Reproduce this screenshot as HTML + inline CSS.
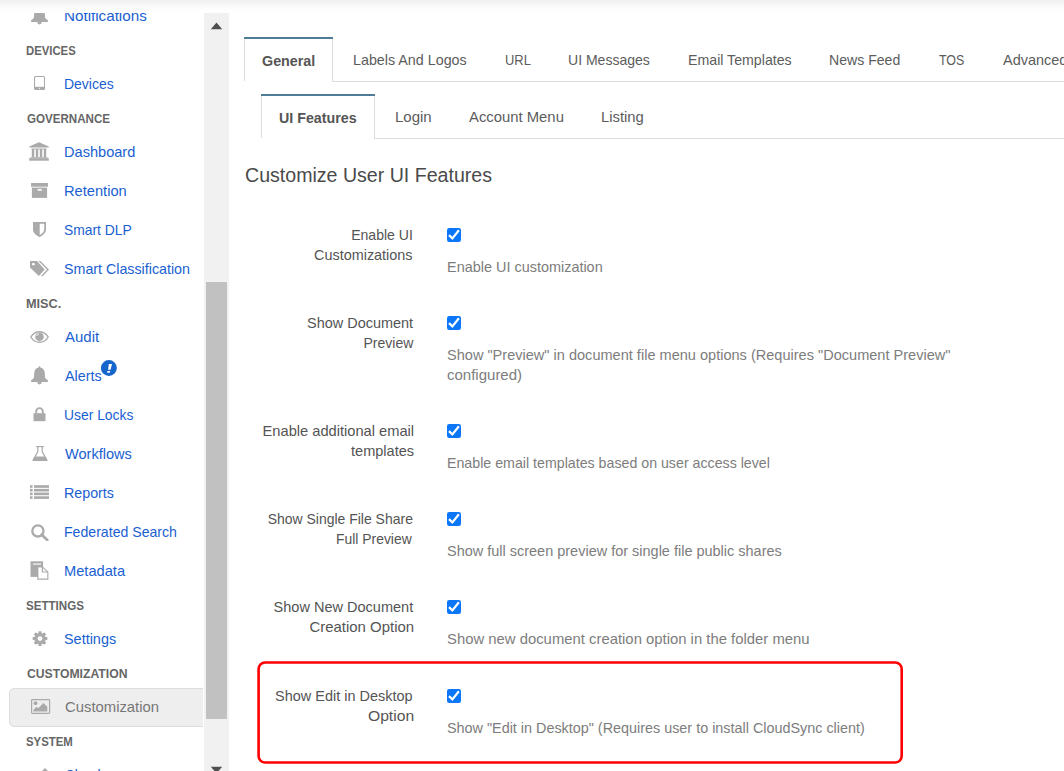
<!DOCTYPE html>
<html><head><meta charset="utf-8"><style>
html,body{margin:0;padding:0;background:#fff;width:1064px;height:771px;overflow:hidden;position:relative;font-family:"Liberation Sans",sans-serif}
.t{position:absolute;white-space:nowrap}
.b{position:absolute;display:block}
#side{position:absolute;left:0;top:13px;width:203px;height:758px;overflow:hidden;background:#fff}
#track{position:absolute;left:204px;top:13px;width:25px;height:758px;background:#f1f1f1}
#thumb{position:absolute;left:206px;top:282px;width:21px;height:437px;background:#c1c1c1}
</style></head><body>
<div class="b" style="left:244px;top:39px;width:89px;height:42px;border:1px solid #dddddd;border-top:none;border-bottom:none;background:#fff;box-sizing:border-box"></div><div class="b" style="left:244px;top:37px;width:89px;height:2px;background:#4e7c96"></div><div class="b" style="left:332px;top:81px;width:732px;height:1px;background:#dddddd"></div><div id="t0" class="t" style="left:262.00px;top:53.10px;font-size:15px;line-height:15px;color:#555;font-weight:700;transform:scaleX(0.9538);transform-origin:left center">General</div><div id="t1" class="t" style="left:353.00px;top:52.30px;font-size:15px;line-height:15px;color:#5c5c5c;font-weight:400;transform:scaleX(0.9534);transform-origin:left center">Labels And Logos</div><div id="t2" class="t" style="left:505.00px;top:52.30px;font-size:15px;line-height:15px;color:#5c5c5c;font-weight:400;transform:scaleX(0.8626);transform-origin:left center">URL</div><div id="t3" class="t" style="left:568.00px;top:52.30px;font-size:15px;line-height:15px;color:#5c5c5c;font-weight:400;transform:scaleX(0.9354);transform-origin:left center">UI Messages</div><div id="t4" class="t" style="left:688.00px;top:52.30px;font-size:15px;line-height:15px;color:#5c5c5c;font-weight:400;transform:scaleX(0.9445);transform-origin:left center">Email Templates</div><div id="t5" class="t" style="left:828.80px;top:52.30px;font-size:15px;line-height:15px;color:#5c5c5c;font-weight:400;transform:scaleX(0.9393);transform-origin:left center">News Feed</div><div id="t6" class="t" style="left:939.00px;top:52.30px;font-size:15px;line-height:15px;color:#5c5c5c;font-weight:400;transform:scaleX(0.8281);transform-origin:left center">TOS</div><div id="t7" class="t" style="left:1002.50px;top:52.30px;font-size:15px;line-height:15px;color:#5c5c5c;font-weight:400;transform:scaleX(0.9650);transform-origin:left center">Advanced</div><div class="b" style="left:261px;top:96px;width:114px;height:42px;border:1px solid #dddddd;border-top:none;border-bottom:none;background:#fff;box-sizing:border-box"></div><div class="b" style="left:261px;top:94px;width:114px;height:2px;background:#4e7c96"></div><div class="b" style="left:374px;top:138px;width:690px;height:1px;background:#dddddd"></div><div id="t8" class="t" style="left:279.00px;top:110.00px;font-size:15px;line-height:15px;color:#555;font-weight:700;transform:scaleX(0.9500);transform-origin:left center">UI Features</div><div id="t9" class="t" style="left:394.60px;top:109.30px;font-size:15px;line-height:15px;color:#5c5c5c;font-weight:400;transform:scaleX(1.0005);transform-origin:left center">Login</div><div id="t10" class="t" style="left:469.20px;top:109.30px;font-size:15px;line-height:15px;color:#5c5c5c;font-weight:400;transform:scaleX(0.9895);transform-origin:left center">Account Menu</div><div id="t11" class="t" style="left:601.00px;top:109.30px;font-size:15px;line-height:15px;color:#5c5c5c;font-weight:400;transform:scaleX(0.9879);transform-origin:left center">Listing</div><div id="t12" class="t" style="left:244.50px;top:165.05px;font-size:20.5px;line-height:20.5px;color:#4a4a4a;font-weight:400;transform:scaleX(0.9551);transform-origin:left center">Customize User UI Features</div><div id="t13" class="t" style="right:651.00px;top:227.30px;font-size:15px;line-height:15px;color:#545454;font-weight:400;transform:scaleX(0.9366);transform-origin:right center">Enable UI</div><div id="t14" class="t" style="right:651.00px;top:247.30px;font-size:15px;line-height:15px;color:#545454;font-weight:400;transform:scaleX(0.9605);transform-origin:right center">Customizations</div><svg class="b" style="left:447px;top:228px" width="14" height="14" viewBox="0 0 14 14"><rect x="0" y="0" width="14" height="14" rx="2.2" fill="#0b76f7"/><path d="M2.0 7.1 L5.4 10.4 L11.9 2.3" fill="none" stroke="#fff" stroke-width="2.2" stroke-linecap="butt" stroke-linejoin="miter"/></svg><div id="t15" class="t" style="left:447.00px;top:259.30px;font-size:15px;line-height:15px;color:#7d7d7d;font-weight:400;transform:scaleX(0.9625);transform-origin:left center">Enable UI customization</div><div id="t16" class="t" style="right:651.00px;top:315.30px;font-size:15px;line-height:15px;color:#545454;font-weight:400;transform:scaleX(0.9631);transform-origin:right center">Show Document</div><div id="t17" class="t" style="right:651.00px;top:335.30px;font-size:15px;line-height:15px;color:#545454;font-weight:400;transform:scaleX(0.9347);transform-origin:right center">Preview</div><svg class="b" style="left:447px;top:316px" width="14" height="14" viewBox="0 0 14 14"><rect x="0" y="0" width="14" height="14" rx="2.2" fill="#0b76f7"/><path d="M2.0 7.1 L5.4 10.4 L11.9 2.3" fill="none" stroke="#fff" stroke-width="2.2" stroke-linecap="butt" stroke-linejoin="miter"/></svg><div id="t18" class="t" style="left:447.00px;top:347.30px;font-size:15px;line-height:15px;color:#7d7d7d;font-weight:400;transform:scaleX(0.9700);transform-origin:left center">Show &quot;Preview&quot; in document file menu options (Requires &quot;Document Preview&quot;</div><div id="t19" class="t" style="left:447.00px;top:367.30px;font-size:15px;line-height:15px;color:#7d7d7d;font-weight:400;transform:scaleX(1.0002);transform-origin:left center">configured)</div><div id="t20" class="t" style="right:650.00px;top:423.30px;font-size:15px;line-height:15px;color:#545454;font-weight:400;transform:scaleX(0.9771);transform-origin:right center">Enable additional email</div><div id="t21" class="t" style="right:650.00px;top:443.30px;font-size:15px;line-height:15px;color:#545454;font-weight:400;transform:scaleX(0.9691);transform-origin:right center">templates</div><svg class="b" style="left:447px;top:424px" width="14" height="14" viewBox="0 0 14 14"><rect x="0" y="0" width="14" height="14" rx="2.2" fill="#0b76f7"/><path d="M2.0 7.1 L5.4 10.4 L11.9 2.3" fill="none" stroke="#fff" stroke-width="2.2" stroke-linecap="butt" stroke-linejoin="miter"/></svg><div id="t22" class="t" style="left:447.00px;top:455.30px;font-size:15px;line-height:15px;color:#7d7d7d;font-weight:400;transform:scaleX(0.9469);transform-origin:left center">Enable email templates based on user access level</div><div id="t23" class="t" style="right:651.00px;top:511.30px;font-size:15px;line-height:15px;color:#545454;font-weight:400;transform:scaleX(0.9318);transform-origin:right center">Show Single File Share</div><div id="t24" class="t" style="right:652.00px;top:531.30px;font-size:15px;line-height:15px;color:#545454;font-weight:400;transform:scaleX(0.9260);transform-origin:right center">Full Preview</div><svg class="b" style="left:447px;top:512px" width="14" height="14" viewBox="0 0 14 14"><rect x="0" y="0" width="14" height="14" rx="2.2" fill="#0b76f7"/><path d="M2.0 7.1 L5.4 10.4 L11.9 2.3" fill="none" stroke="#fff" stroke-width="2.2" stroke-linecap="butt" stroke-linejoin="miter"/></svg><div id="t25" class="t" style="left:447.00px;top:543.30px;font-size:15px;line-height:15px;color:#7d7d7d;font-weight:400;transform:scaleX(0.9652);transform-origin:left center">Show full screen preview for single file public shares</div><div id="t26" class="t" style="right:651.00px;top:599.30px;font-size:15px;line-height:15px;color:#545454;font-weight:400;transform:scaleX(0.9686);transform-origin:right center">Show New Document</div><div id="t27" class="t" style="right:650.00px;top:619.30px;font-size:15px;line-height:15px;color:#545454;font-weight:400;transform:scaleX(0.9953);transform-origin:right center">Creation Option</div><svg class="b" style="left:447px;top:600px" width="14" height="14" viewBox="0 0 14 14"><rect x="0" y="0" width="14" height="14" rx="2.2" fill="#0b76f7"/><path d="M2.0 7.1 L5.4 10.4 L11.9 2.3" fill="none" stroke="#fff" stroke-width="2.2" stroke-linecap="butt" stroke-linejoin="miter"/></svg><div id="t28" class="t" style="left:447.00px;top:631.30px;font-size:15px;line-height:15px;color:#7d7d7d;font-weight:400;transform:scaleX(0.9904);transform-origin:left center">Show new document creation option in the folder menu</div><div id="t29" class="t" style="right:651.00px;top:688.30px;font-size:15px;line-height:15px;color:#545454;font-weight:400;transform:scaleX(0.9646);transform-origin:right center">Show Edit in Desktop</div><div id="t30" class="t" style="right:650.00px;top:708.30px;font-size:15px;line-height:15px;color:#545454;font-weight:400;transform:scaleX(1.0471);transform-origin:right center">Option</div><svg class="b" style="left:447px;top:689px" width="14" height="14" viewBox="0 0 14 14"><rect x="0" y="0" width="14" height="14" rx="2.2" fill="#0b76f7"/><path d="M2.0 7.1 L5.4 10.4 L11.9 2.3" fill="none" stroke="#fff" stroke-width="2.2" stroke-linecap="butt" stroke-linejoin="miter"/></svg><div id="t31" class="t" style="left:447.00px;top:720.30px;font-size:15px;line-height:15px;color:#7d7d7d;font-weight:400;transform:scaleX(0.9585);transform-origin:left center">Show &quot;Edit in Desktop&quot; (Requires user to install CloudSync client)</div><svg class="b" style="left:256px;top:660px" width="650" height="106" viewBox="0 0 650 106"><rect x="2.6" y="2.55" width="643.1" height="99.9" rx="6.5" fill="none" stroke="#ff0000" stroke-width="2.6"/></svg>
<div id="side"><div id="t32" class="t" style="left:64.00px;top:-4.70px;font-size:15px;line-height:15px;color:#1a5fd2;font-weight:400;transform:scaleX(1.0125);transform-origin:left center">Notifications</div><svg class="b" style="left:30px;top:-6.70px" width="19" height="20" viewBox="0 0 19 20"><path d="M9.5 0.2 C10.2 0.2 10.4 0.9 10.4 1.5 C13.3 2.1 14.8 4.5 14.8 7.6 L15 10.8 C15.2 12.6 16.5 13.6 17.9 14.2 L17.9 15.9 L1.1 15.9 L1.1 14.2 C2.5 13.6 3.8 12.6 4 10.8 L4.2 7.6 C4.2 4.5 5.7 2.1 8.6 1.5 C8.6 0.9 8.8 0.2 9.5 0.2 Z" fill="#aaaaaa"/><path d="M7.2 15.6 L11.8 15.6 L11.8 16.1 A2.3 2.3 0 0 1 7.2 16.1 Z" fill="#aaaaaa"/></svg><div id="t33" class="t" style="left:26.00px;top:32.02px;font-size:12.5px;line-height:12.5px;color:#666666;font-weight:700;transform:scaleX(0.9058);transform-origin:left center">DEVICES</div><div id="t34" class="t" style="left:64.00px;top:63.30px;font-size:15px;line-height:15px;color:#1a5fd2;font-weight:400;transform:scaleX(0.9318);transform-origin:left center">Devices</div><svg class="b" style="left:34px;top:63.00px" width="11" height="14" viewBox="0 0 11 14"><rect x="0.5" y="0.5" width="10" height="13" rx="1.2" fill="none" stroke="#aaaaaa" stroke-width="1.1"/><rect x="0.5" y="10.8" width="10" height="2.7" fill="#aaaaaa"/><circle cx="5.5" cy="12.3" r="0.6" fill="#fff"/></svg><div id="t35" class="t" style="left:27.00px;top:100.22px;font-size:12.5px;line-height:12.5px;color:#666666;font-weight:700;transform:scaleX(0.9270);transform-origin:left center">GOVERNANCE</div><div id="t36" class="t" style="left:64.00px;top:131.20px;font-size:15px;line-height:15px;color:#1a5fd2;font-weight:400;transform:scaleX(0.9720);transform-origin:left center">Dashboard</div><svg class="b" style="left:29px;top:129.20px" width="20" height="19" viewBox="0 0 20 19"><path d="M10 0.2 L19.8 4.6 L19.8 5.6 L0.2 5.6 L0.2 4.6 Z" fill="#aaaaaa"/><rect x="2.4" y="6.5" width="15.2" height="0.9" fill="#aaaaaa"/><rect x="2.8" y="7" width="2.4" height="8" fill="#aaaaaa"/><rect x="6.8" y="7" width="2.4" height="8" fill="#aaaaaa"/><rect x="10.8" y="7" width="2.4" height="8" fill="#aaaaaa"/><rect x="14.8" y="7" width="2.4" height="8" fill="#aaaaaa"/><rect x="1.6" y="15.2" width="16.8" height="1" fill="#aaaaaa"/><rect x="0.2" y="16.2" width="19.6" height="2.5" fill="#aaaaaa"/></svg><div id="t37" class="t" style="left:64.00px;top:170.10px;font-size:15px;line-height:15px;color:#1a5fd2;font-weight:400;transform:scaleX(0.9760);transform-origin:left center">Retention</div><svg class="b" style="left:31px;top:169.90px" width="17" height="15" viewBox="0 0 17 15"><rect x="0" y="0" width="17" height="3.7" fill="#aaaaaa"/><rect x="0.9" y="4.6" width="15.2" height="10.3" fill="#aaaaaa"/><rect x="6.6" y="6.1" width="4.2" height="1.6" fill="#fff"/></svg><div id="t38" class="t" style="left:64.00px;top:209.10px;font-size:15px;line-height:15px;color:#1a5fd2;font-weight:400;transform:scaleX(0.9226);transform-origin:left center">Smart DLP</div><svg class="b" style="left:33px;top:208.80px" width="13" height="15" viewBox="0 0 13 15"><path d="M0 0 L13 0 L13 7.5 C13 11 9.5 13.5 6.5 15 C3.5 13.5 0 11 0 7.5 Z" fill="#aaaaaa"/><path d="M6.7 1.7 L11.2 1.7 L11.2 7.6 C11.2 10 9 11.9 6.7 13.1 Z" fill="#fff"/></svg><div id="t39" class="t" style="left:64.00px;top:248.10px;font-size:15px;line-height:15px;color:#1a5fd2;font-weight:400;transform:scaleX(0.9501);transform-origin:left center">Smart Classification</div><svg class="b" style="left:30px;top:247.90px" width="20" height="16" viewBox="0 0 20 16"><path d="M0 0.1 L7 0.1 L14.7 8.6 L8.9 15 L0 6.6 Z" fill="#aaaaaa"/><rect x="2.1" y="2.1" width="2.6" height="2.1" fill="#fff"/><path d="M8.5 0.1 L10.4 0.1 L19 8.6 L12.9 15.1 L11 15.1 L17 8.6 Z" fill="#aaaaaa"/></svg><div id="t40" class="t" style="left:26.00px;top:285.02px;font-size:12.5px;line-height:12.5px;color:#666666;font-weight:700;transform:scaleX(1.0157);transform-origin:left center">MISC.</div><div id="t41" class="t" style="left:65.00px;top:316.10px;font-size:15px;line-height:15px;color:#1a5fd2;font-weight:400">Audit</div><svg class="b" style="left:30px;top:318.00px" width="19" height="12" viewBox="0 0 19 12"><path d="M0.8 6 C3 2.4 6 0.7 9.5 0.7 C13 0.7 16 2.4 18.2 6 C16 9.6 13 11.3 9.5 11.3 C6 11.3 3 9.6 0.8 6 Z" fill="none" stroke="#aaaaaa" stroke-width="1.4"/><circle cx="9.5" cy="5.7" r="4.3" fill="#aaaaaa"/><path d="M6.8 5 A3 3 0 0 1 9 2.6" fill="none" stroke="#fff" stroke-width="0.9"/></svg><div id="t42" class="t" style="left:64.60px;top:355.10px;font-size:15px;line-height:15px;color:#1a5fd2;font-weight:400;transform:scaleX(0.9550);transform-origin:left center">Alerts</div><svg class="b" style="left:30px;top:353.10px" width="19" height="20" viewBox="0 0 19 20"><path d="M9.5 0.2 C10.2 0.2 10.4 0.9 10.4 1.5 C13.3 2.1 14.8 4.5 14.8 7.6 L15 10.8 C15.2 12.6 16.5 13.6 17.9 14.2 L17.9 15.9 L1.1 15.9 L1.1 14.2 C2.5 13.6 3.8 12.6 4 10.8 L4.2 7.6 C4.2 4.5 5.7 2.1 8.6 1.5 C8.6 0.9 8.8 0.2 9.5 0.2 Z" fill="#aaaaaa"/><path d="M7.2 15.6 L11.8 15.6 L11.8 16.1 A2.3 2.3 0 0 1 7.2 16.1 Z" fill="#aaaaaa"/></svg><div id="t43" class="t" style="left:64.00px;top:394.10px;font-size:15px;line-height:15px;color:#1a5fd2;font-weight:400;transform:scaleX(0.9247);transform-origin:left center">User Locks</div><svg class="b" style="left:33px;top:393.80px" width="13" height="15" viewBox="0 0 13 15"><path d="M3.2 6.5 L3.2 4.4 A3.3 3.3 0 0 1 9.8 4.4 L9.8 6.5" fill="none" stroke="#aaaaaa" stroke-width="1.9"/><rect x="0.5" y="6.2" width="12" height="8" fill="#aaaaaa"/></svg><div id="t44" class="t" style="left:65.00px;top:433.10px;font-size:15px;line-height:15px;color:#1a5fd2;font-weight:400;transform:scaleX(0.9707);transform-origin:left center">Workflows</div><svg class="b" style="left:32px;top:432.90px" width="16" height="15" viewBox="0 0 16 15"><rect x="4.2" y="0" width="7.6" height="1.1" fill="#aaaaaa"/><path d="M5.2 1 L5.2 5.6 L0.4 14 L0.6 15 L15.4 15 L15.6 14 L10.8 5.6 L10.8 1 L9.6 1 L9.6 6 L12.3 10.6 L3.7 10.6 L6.4 6 L6.4 1 Z" fill="#aaaaaa"/></svg><div id="t45" class="t" style="left:64.00px;top:472.10px;font-size:15px;line-height:15px;color:#1a5fd2;font-weight:400;transform:scaleX(0.9511);transform-origin:left center">Reports</div><svg class="b" style="left:30px;top:471.80px" width="19" height="14" viewBox="0 0 19 14"><rect x="0" y="0.2" width="2.6" height="2.6" fill="#aaaaaa"/><rect x="4" y="0.2" width="15" height="2.6" fill="#aaaaaa"/><rect x="0" y="3.9" width="2.6" height="2.6" fill="#aaaaaa"/><rect x="4" y="3.9" width="15" height="2.6" fill="#aaaaaa"/><rect x="0" y="7.6" width="2.6" height="2.6" fill="#aaaaaa"/><rect x="4" y="7.6" width="15" height="2.6" fill="#aaaaaa"/><rect x="0" y="11.3" width="2.6" height="2.6" fill="#aaaaaa"/><rect x="4" y="11.3" width="15" height="2.6" fill="#aaaaaa"/></svg><div id="t46" class="t" style="left:64.00px;top:511.10px;font-size:15px;line-height:15px;color:#1a5fd2;font-weight:400;transform:scaleX(0.9407);transform-origin:left center">Federated Search</div><svg class="b" style="left:31px;top:510.90px" width="18" height="17" viewBox="0 0 18 17"><circle cx="6.9" cy="6.9" r="5.6" fill="none" stroke="#aaaaaa" stroke-width="2.3"/><path d="M10.8 10.8 L16.2 16" stroke="#aaaaaa" stroke-width="2.8" stroke-linecap="round"/></svg><div id="t47" class="t" style="left:64.00px;top:550.10px;font-size:15px;line-height:15px;color:#1a5fd2;font-weight:400;transform:scaleX(0.9757);transform-origin:left center">Metadata</div><svg class="b" style="left:30px;top:547.80px" width="19" height="19" viewBox="0 0 19 19"><rect x="0.5" y="0.3" width="12.6" height="15.6" fill="#aaaaaa"/><rect x="3.1" y="2.5" width="8" height="1.1" fill="#fff"/><path d="M7.3 5.4 L12.6 5.4 L18.4 10.8 L18.4 18.7 L7.3 18.7 Z" fill="#aaaaaa"/><path d="M8.4 6.5 L11.8 6.5 L11.8 11.4 L17.3 11.4 L17.3 17.6 L8.4 17.6 Z" fill="#fff"/><path d="M13 7.2 L16.6 10.4 L13 10.4 Z" fill="#fff"/></svg><div id="t48" class="t" style="left:26.00px;top:587.02px;font-size:12.5px;line-height:12.5px;color:#666666;font-weight:700;transform:scaleX(0.9263);transform-origin:left center">SETTINGS</div><div id="t49" class="t" style="left:64.00px;top:618.10px;font-size:15px;line-height:15px;color:#1a5fd2;font-weight:400;transform:scaleX(0.9617);transform-origin:left center">Settings</div><svg class="b" style="left:31.7px;top:618.00px" width="16" height="15.5" viewBox="0 0 16 15.5"><polygon points="6.40,2.44 6.51,0.25 9.49,0.25 9.60,2.44 10.52,2.82 12.14,1.35 14.25,3.46 12.78,5.08 13.16,6.00 15.35,6.11 15.35,9.09 13.16,9.20 12.78,10.12 14.25,11.74 12.14,13.85 10.52,12.38 9.60,12.76 9.49,14.95 6.51,14.95 6.40,12.76 5.48,12.38 3.86,13.85 1.75,11.74 3.22,10.12 2.84,9.20 0.65,9.09 0.65,6.11 2.84,6.00 3.22,5.08 1.75,3.46 3.86,1.35 5.48,2.82" fill="#aaaaaa"/><circle cx="8" cy="7.6" r="5.6" fill="#aaaaaa"/><circle cx="8" cy="7.6" r="2.4" fill="#fff"/></svg><div id="t50" class="t" style="left:27.00px;top:655.02px;font-size:12.5px;line-height:12.5px;color:#666666;font-weight:700;transform:scaleX(0.9755);transform-origin:left center">CUSTOMIZATION</div><div class="b" style="left:9px;top:675px;width:205px;height:39px;background:#eeeeee;border:1px solid #dcdcdc;border-radius:5px;box-sizing:border-box"></div><div id="t51" class="t" style="left:65.00px;top:686.10px;font-size:15px;line-height:15px;color:#777777;font-weight:400;transform:scaleX(0.9895);transform-origin:left center">Customization</div><svg class="b" style="left:31px;top:685.70px" width="20" height="16" viewBox="0 0 20 16"><rect x="0.6" y="0.6" width="18.0" height="13.8" rx="0.8" fill="none" stroke="#aaaaaa" stroke-width="1.2"/><circle cx="4.5" cy="4.2" r="1.9" fill="#aaaaaa"/><path d="M2.3 12.4 L2.3 10.9 L5.6 7.8 L7.2 9.2 L12.4 3.9 L16.3 7.8 L16.3 12.4 Z" fill="#aaaaaa"/></svg><div id="t52" class="t" style="left:26.00px;top:723.02px;font-size:12.5px;line-height:12.5px;color:#666666;font-weight:700;transform:scaleX(0.9102);transform-origin:left center">SYSTEM</div><div id="t53" class="t" style="left:64.50px;top:754.10px;font-size:15px;line-height:15px;color:#1a5fd2;font-weight:400;transform:scaleX(0.9100);transform-origin:left center">Cloud</div><svg class="b" style="left:39px;top:754.60px" width="12" height="12" viewBox="0 0 12 12"><path d="M6 0 L12 6 L0 6 Z" fill="#aaaaaa"/></svg><svg class="b" style="left:101px;top:347.00px" width="16" height="16" viewBox="0 0 16 16"><circle cx="7.9" cy="8" r="7.95" fill="#1766cb"/><path d="M7.8 4 L11 4 L9.6 9.7 L7.1 9.7 Z" fill="#fff"/><path d="M6.4 11 L9.1 11 L8.8 12.8 L6.1 12.8 Z" fill="#fff"/></svg></div>
<div id="track"></div><div id="thumb"></div>
<svg class="b" style="left:210px;top:22px" width="13" height="8" viewBox="0 0 13 8"><path d="M6.5 0.6 L12.2 7.2 L0.8 7.2 Z" fill="#505050"/></svg>
<svg class="b" style="left:210px;top:766px" width="13" height="8" viewBox="0 0 13 8"><path d="M0.8 0.8 L12.2 0.8 L6.5 7.4 Z" fill="#505050"/></svg>
<div class="b" style="left:0;top:0px;width:1064px;height:1px;background:rgb(239,239,239)"></div><div class="b" style="left:0;top:1px;width:1064px;height:1px;background:rgb(241,241,241)"></div><div class="b" style="left:0;top:2px;width:1064px;height:1px;background:rgb(243,243,243)"></div><div class="b" style="left:0;top:3px;width:1064px;height:1px;background:rgb(245,245,245)"></div><div class="b" style="left:0;top:4px;width:1064px;height:1px;background:rgb(247,247,247)"></div><div class="b" style="left:0;top:5px;width:1064px;height:1px;background:rgb(249,249,249)"></div><div class="b" style="left:0;top:6px;width:1064px;height:1px;background:rgb(250,250,250)"></div><div class="b" style="left:0;top:7px;width:1064px;height:1px;background:rgb(251,251,251)"></div><div class="b" style="left:0;top:8px;width:1064px;height:1px;background:rgb(252,252,252)"></div><div class="b" style="left:0;top:9px;width:1064px;height:1px;background:rgb(253,253,253)"></div><div class="b" style="left:0;top:10px;width:1064px;height:1px;background:rgb(254,254,254)"></div><div class="b" style="left:0;top:11px;width:1064px;height:1px;background:rgb(254,254,254)"></div><div class="b" style="left:0;top:12px;width:1064px;height:1px;background:rgb(255,255,255)"></div>
</body></html>
